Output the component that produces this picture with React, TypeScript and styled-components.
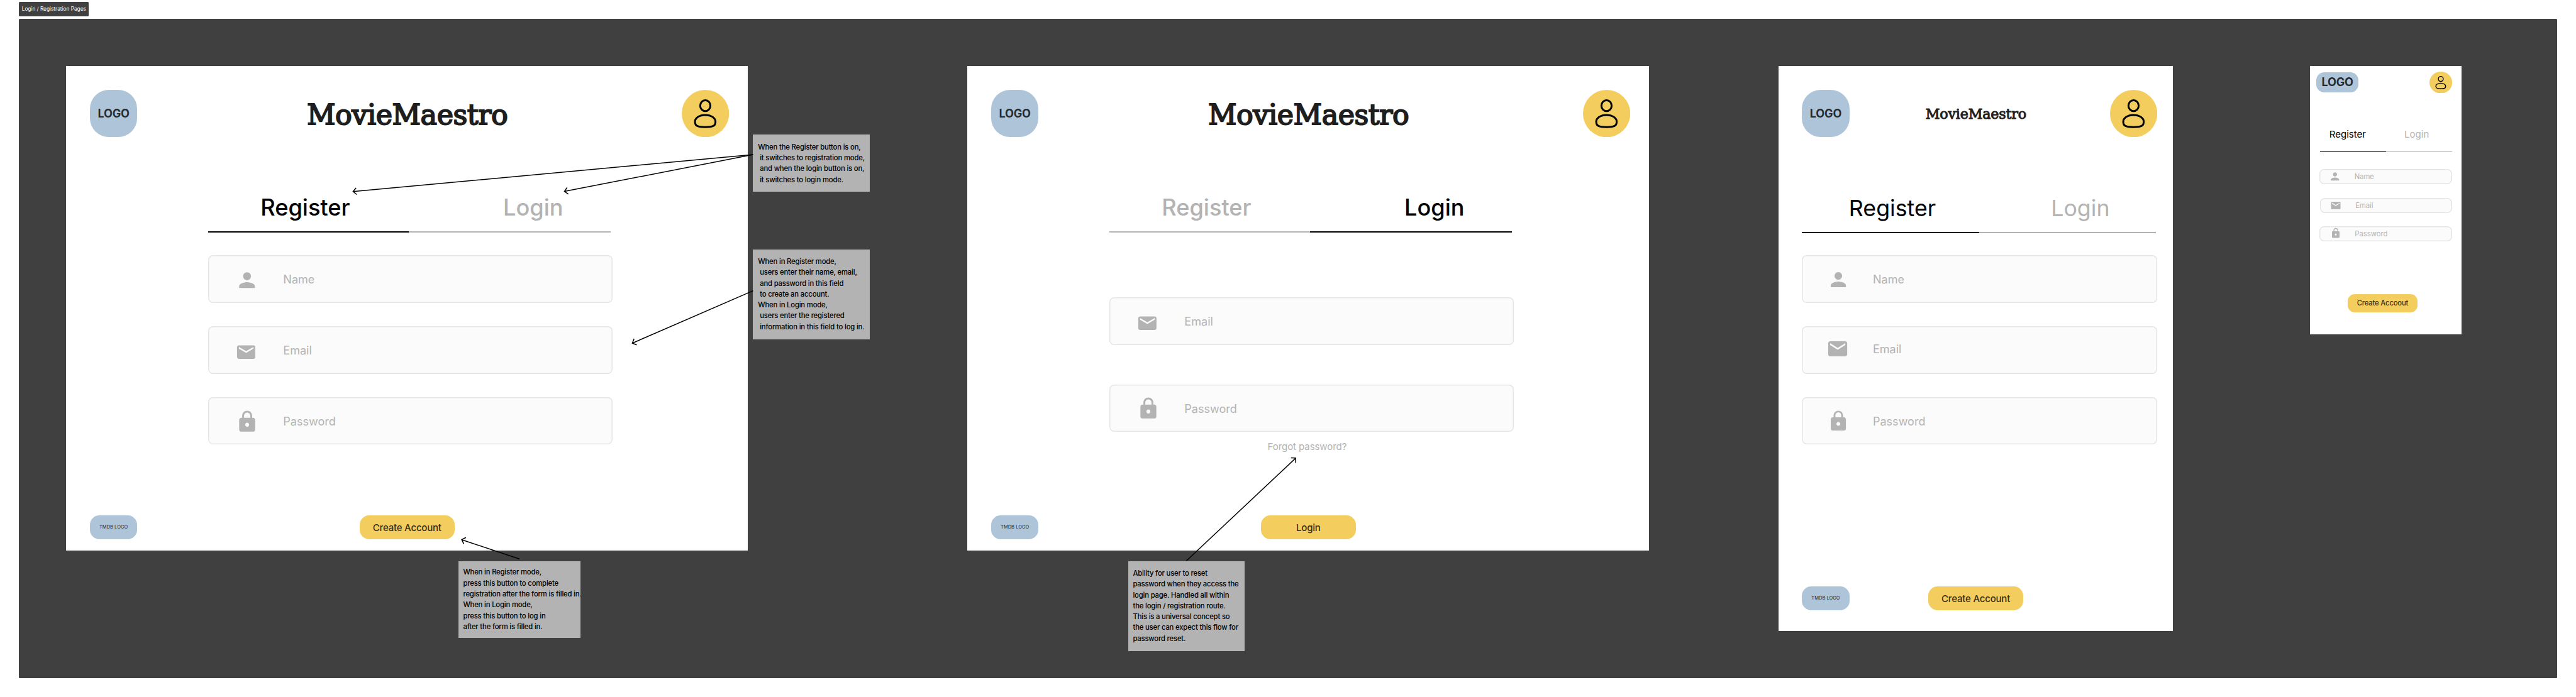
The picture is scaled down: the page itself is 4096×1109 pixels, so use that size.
import React from "react";
import styled, { createGlobalStyle, css } from "styled-components";

/* 1rem equals ten units of the design canvas (canvas width: 544.2rem). */
const u = (n: number) => `${+(n / 10).toFixed(3)}rem`;

const GlobalStyle = createGlobalStyle`
  html { font-size: 7.5266px; }
  body {
    margin: 0;
    background: #fff;
    overflow: hidden;
    font-family: Inter, "Liberation Sans", sans-serif;
  }
  *, *::before, *::after { box-sizing: border-box; }
`;

/* ---------- canvas ---------- */

const Page = styled.div`
  width: ${u(5442)};
  height: ${u(1473)};
  padding: ${u(4)} ${u(40)} 0;
`;

const SectionLabel = styled.div`
  display: flex;
  align-items: center;
  justify-content: center;
  width: ${u(148)};
  height: ${u(30)};
  margin-bottom: ${u(6)};
  border-radius: ${u(2)};
  background: #404040;
  color: #fff;
  font-size: ${u(11)};
  line-height: 1;
  white-space: nowrap;
`;

const Section = styled.section`
  position: relative;
  display: flex;
  align-items: flex-start;
  height: ${u(1394)};
  padding: ${u(100)};
  border-radius: ${u(2)};
  background: #404040;
`;

const Artboard = styled.article<{ $w: number; $h: number; $gap?: number }>`
  display: flex;
  flex-direction: column;
  flex: none;
  width: ${(p) => u(p.$w)};
  height: ${(p) => u(p.$h)};
  margin-left: ${(p) => u(p.$gap ?? 0)};
  background: #fff;
`;

/* ---------- header ---------- */

const Header = styled.header<{ $right: number }>`
  display: grid;
  grid-template-columns: ${u(100)} 1fr ${u(100)};
  align-items: center;
  height: ${u(150)};
  padding: ${u(50)} ${(p) => u(p.$right)} 0 ${u(50)};
`;

const PhoneHeader = styled.header`
  display: flex;
  justify-content: space-between;
  align-items: center;
  padding: ${u(11)} ${u(20)} 0 ${u(13)};
`;

const Logo = styled.div<{ $w: number; $h: number; $r: number }>`
  display: flex;
  align-items: center;
  justify-content: center;
  width: ${(p) => u(p.$w)};
  height: ${(p) => u(p.$h)};
  border-radius: ${(p) => u(p.$r)};
  background: #adc4d9;
  color: rgba(0, 0, 0, 0.8);
  font-size: ${u(24)};
  font-weight: 700;
  letter-spacing: -0.01em;
  line-height: 1;
`;

const Title = styled.h1<{ $size: number; $shift: number; $top: number }>`
  margin: 0;
  padding: ${(p) => u(p.$top)} ${(p) => u(p.$shift)} 0 0;
  color: #1e1e1e;
  font-family: "Roboto Slab", "DejaVu Serif", serif;
  font-size: ${(p) => u(p.$size)};
  font-weight: 400;
  letter-spacing: -0.0097em;
  line-height: 1.2;
  text-align: center;
  -webkit-text-stroke: 0.045em #1e1e1e;
`;

const AvatarSvg = styled.svg<{ $w: number; $h: number }>`
  display: block;
  width: ${(p) => u(p.$w)};
  height: ${(p) => u(p.$h)};
`;

function Avatar({ w = 100, h = 100 }: { w?: number; h?: number }) {
  return (
    <AvatarSvg $w={w} $h={h} viewBox="0 0 100 100" preserveAspectRatio="none">
      <circle cx="50" cy="50" r="50" fill="#f3cd5d" />
      <g fill="none" stroke="#000" strokeWidth="4">
        <ellipse cx="49.8" cy="33.5" rx="10.8" ry="11.5" />
        <path d="M49.7 53C62 53 71.3 59.3 71.3 67.3C71.3 76 66 78.6 49.7 78.6C33.4 78.6 28 76 28 67.3C28 59.3 37.4 53 49.7 53Z" />
      </g>
    </AvatarSvg>
  );
}

/* ---------- tabs ---------- */

const Tabs = styled.nav<{ $top: number; $left: number }>`
  display: flex;
  margin: ${(p) => u(p.$top)} 0 0 ${(p) => u(p.$left)};
`;

const Tab = styled.div<{ $w: number; $inset: number; $size: number; $active?: boolean; $kind: Kind }>`
  display: flex;
  flex-direction: column;
  justify-content: space-between;
  width: ${(p) => u(p.$w)};
  height: ${(p) => u(p.$kind === "phone" ? 52 : 82.5)};
  color: ${(p) => (p.$active ? "#000" : "#b3b3b3")};
  font-size: ${(p) => u(p.$size)};
  font-weight: ${(p) => (p.$kind === "desktop" ? 500 : 400)};
  line-height: ${(p) => u(p.$kind === "phone" ? 30 : 60)};
  text-indent: ${(p) => u(p.$inset)};
  white-space: nowrap;

  &::after {
    content: "";
    height: ${(p) => (p.$kind === "phone" ? "1px" : "2px")};
    background: currentColor;
  }
`;

/* ---------- form ---------- */

type Kind = "desktop" | "tablet" | "phone";
type IconName = "person" | "mail" | "lock";

const ICONS: Record<IconName, string> = {
  person:
    "M12 12c2.21 0 4-1.79 4-4s-1.79-4-4-4-4 1.79-4 4 1.79 4 4 4zm0 2c-2.67 0-8 1.34-8 4v2h16v-2c0-2.66-5.33-4-8-4z",
  mail: "M20 4H4c-1.1 0-1.99.9-1.99 2L2 18c0 1.1.9 2 2 2h16c1.1 0 2-.9 2-2V6c0-1.1-.9-2-2-2zm0 4l-8 5-8-5V6l8 5 8-5v2z",
  lock: "M18 8h-1V6c0-2.76-2.24-5-5-5S7 3.24 7 6v2H6c-1.1 0-2 .9-2 2v10c0 1.1.9 2 2 2h12c1.1 0 2-.9 2-2V10c0-1.1-.9-2-2-2zm-6 9c-1.1 0-2-.9-2-2s.9-2 2-2 2 .9 2 2-.9 2-2 2zm3.1-9H8.9V6c0-1.71 1.39-3.1 3.1-3.1 1.71 0 3.1 1.39 3.1 3.1v2z",
};

/* Icon frame inside its field: left, top, width, height. */
const ICON_FRAMES: Record<Kind, Record<IconName, [number, number, number, number]>> = {
  desktop: {
    person: [57, 27.6, 50, 50],
    mail: [57.3, 32.4, 46.2, 42.9],
    lock: [56.8, 25.8, 50.5, 50.5],
  },
  tablet: {
    person: [52.2, 28, 48, 48],
    mail: [52, 23, 48, 48],
    lock: [52.2, 26, 48, 48],
  },
  phone: {
    person: [20.4, 1.7, 26, 26],
    mail: [21, 4, 24, 24],
    lock: [23, 2.6, 24, 24],
  },
};

const Form = styled.div<{ $top: number; $left: number; $gap: number }>`
  display: flex;
  flex-direction: column;
  align-items: flex-start;
  gap: ${(p) => u(p.$gap)};
  margin: ${(p) => u(p.$top)} 0 0 ${(p) => u(p.$left)};
`;

const FieldBox = styled.label<{ $w: number; $h: number; $text: number; $size: number; $nudge: number }>`
  display: grid;
  grid-template-columns: ${(p) => u(p.$text)} 1fr;
  width: ${(p) => u(p.$w)};
  height: ${(p) => u(p.$h)};
  margin-left: ${(p) => u(p.$nudge)};
  border-radius: ${u(10)};
  background: #fbfbfb;
  box-shadow: inset 0 0 0 ${u(2)} #e6e6e6;
  color: #b3b3b3;
  font-size: ${(p) => u(p.$size)};
`;

const FieldIcon = styled.svg<{ $f: [number, number, number, number] }>`
  display: block;
  width: ${(p) => u(p.$f[2])};
  height: ${(p) => u(p.$f[3])};
  margin: ${(p) => u(p.$f[1])} 0 0 ${(p) => u(p.$f[0])};
  fill: currentColor;
`;

const FieldText = styled.span<{ $center: number }>`
  line-height: ${(p) => u(p.$center * 2)};
`;

interface FieldProps {
  kind: Kind;
  icon: IconName;
  text: string;
  center?: number;
  h?: number;
  nudge?: number;
  textX?: number;
}

function Field({ kind, icon, text, center, h, nudge = 0, textX }: FieldProps) {
  const base = {
    desktop: { w: 854, h: 100, x: 158.3, size: 24, c: 52 },
    tablet: { w: 750, h: 100, x: 149.6, size: 24, c: 51.4 },
    phone: { w: 280, h: 31, x: 74, size: 15, c: 16.2 },
  }[kind];
  return (
    <FieldBox $w={base.w} $h={h ?? base.h} $text={textX ?? base.x} $size={base.size} $nudge={nudge}>
      <FieldIcon $f={ICON_FRAMES[kind][icon]} viewBox="0 0 24 24" preserveAspectRatio="none">
        <path d={ICONS[icon]} />
      </FieldIcon>
      <FieldText $center={center ?? base.c}>{text}</FieldText>
    </FieldBox>
  );
}

const ForgotLink = styled.div`
  margin: ${u(15.6)} 0 0 ${u(634)};
  color: #b3b3b3;
  font-size: ${u(20)};
  letter-spacing: ${u(-0.13)};
  line-height: ${u(31)};
`;

/* ---------- footer ---------- */

const Footer = styled.footer<{ $bottom: number }>`
  display: grid;
  grid-template-columns: 1fr auto 1fr;
  margin-top: auto;
  padding: 0 ${u(50)} ${(p) => u(p.$bottom)};
`;

const TmdbLogo = styled.div`
  display: flex;
  align-items: center;
  justify-content: center;
  width: ${u(100)};
  height: ${u(50)};
  border-radius: ${u(20)};
  background: #adc4d9;
  color: rgba(0, 0, 0, 0.85);
  font-size: ${u(10)};
  line-height: 1;
  white-space: nowrap;
`;

const PrimaryButton = styled.button<{ $small?: boolean }>`
  display: flex;
  align-items: center;
  justify-content: center;
  width: ${u(200)};
  height: ${u(50)};
  padding: 0;
  border: 0;
  border-radius: ${u(20)};
  background: #f3cd5d;
  color: rgba(0, 0, 0, 0.8);
  font-family: inherit;
  font-size: ${u(20)};
  font-weight: 500;
  letter-spacing: -0.015em;
  line-height: 1;
  white-space: nowrap;
  ${(p) =>
    p.$small &&
    css`
      width: ${u(147)};
      height: ${u(38)};
      margin: auto 0 ${u(47)} ${u(80)};
      border-radius: ${u(15)};
      font-size: ${u(15)};
    `}
`;

/* ---------- annotations lying over the canvas ---------- */

const Note = styled.p<{ $x: number; $y: number; $w: number; $h: number; $pad: number }>`
  position: absolute;
  left: ${(p) => u(p.$x - 40)};
  top: ${(p) => u(p.$y - 40)};
  width: ${(p) => u(p.$w)};
  height: ${(p) => u(p.$h)};
  margin: 0;
  padding: ${(p) => u(p.$pad)} 0 0 ${u(10.5)};
  background: #b3b3b3;
  color: #000;
  font-size: ${u(15)};
  font-weight: 500;
  letter-spacing: ${u(-0.23)};
  line-height: ${u(23)};
  white-space: pre;
`;

const ArrowLayer = styled.svg`
  position: absolute;
  left: 0;
  top: 0;
  width: ${u(5362)};
  height: ${u(1394)};
  pointer-events: none;
  fill: none;
  stroke: #000;
  stroke-width: 2;
`;

type Arrow = [number, number, number, number];

const ARROWS: Arrow[] = [
  [1591, 327, 746, 405],
  [1591, 327, 1192.5, 404.8],
  [1591, 614.8, 1336, 725.6],
  [1098, 1182, 975.5, 1141],
  [2506.3, 1186, 2737.5, 968.5],
];

function arrowPath([x1, y1, x2, y2]: Arrow) {
  const angle = Math.atan2(y1 - y2, x1 - x2);
  const wing = (turn: number) =>
    `${(x2 + 10 * Math.cos(angle + turn)).toFixed(1)} ${(y2 + 10 * Math.sin(angle + turn)).toFixed(1)}`;
  return `M${x1} ${y1}L${x2} ${y2}M${wing(Math.PI / 4)}L${x2} ${y2}L${wing(-Math.PI / 4)}`;
}

/* ---------- screens ---------- */

function DesktopScreen({ mode, gap }: { mode: "register" | "login"; gap?: number }) {
  const register = mode === "register";
  return (
    <Artboard $w={1440} $h={1024} $gap={gap}>
      <Header $right={40}>
        <Logo $w={100} $h={100} $r={40}>LOGO</Logo>
        <Title $size={59} $shift={9} $top={5.4}>MovieMaestro</Title>
        <Avatar />
      </Header>
      <Tabs $top={119.5} $left={300}>
        <Tab $kind="desktop" $w={424} $inset={110.5} $size={48} $active={register}>Register</Tab>
        <Tab $kind="desktop" $w={426} $inset={199} $size={48} $active={!register}>Login</Tab>
      </Tabs>
      {register ? (
        <Form $top={48} $left={300} $gap={50}>
          <Field kind="desktop" icon="person" text="Name" />
          <Field kind="desktop" icon="mail" text="Email" />
          <Field kind="desktop" icon="lock" text="Password" />
        </Form>
      ) : (
        <>
          <Form $top={137} $left={300} $gap={84}>
            <Field kind="desktop" icon="mail" text="Email" />
            <Field kind="desktop" icon="lock" text="Password" />
          </Form>
          <ForgotLink>Forgot password?</ForgotLink>
        </>
      )}
      <Footer $bottom={24}>
        <TmdbLogo>TMDB LOGO</TmdbLogo>
        <PrimaryButton>{register ? "Create Account" : "Login"}</PrimaryButton>
      </Footer>
    </Artboard>
  );
}

function TabletScreen() {
  return (
    <Artboard $w={834} $h={1194} $gap={273}>
      <Header $right={34}>
        <Logo $w={100} $h={100} $r={40}>LOGO</Logo>
        <Title $size={29.6} $shift={15.5} $top={1.8}>MovieMaestro</Title>
        <Avatar />
      </Header>
      <Tabs $top={120.5} $left={50}>
        <Tab $kind="tablet" $w={374} $inset={99} $size={47.5} $active>Register</Tab>
        <Tab $kind="tablet" $w={374} $inset={152} $size={47.5}>Login</Tab>
      </Tabs>
      <Form $top={47} $left={50} $gap={50}>
        <Field kind="tablet" icon="person" text="Name" />
        <Field kind="tablet" icon="mail" text="Email" center={48.6} />
        <Field kind="tablet" icon="lock" text="Password" />
      </Form>
      <Footer $bottom={44}>
        <TmdbLogo>TMDB LOGO</TmdbLogo>
        <PrimaryButton>Create Account</PrimaryButton>
      </Footer>
    </Artboard>
  );
}

function PhoneScreen() {
  return (
    <Artboard $w={320} $h={567} $gap={289}>
      <PhoneHeader>
        <Logo $w={90} $h={42} $r={17}>LOGO</Logo>
        <Avatar w={48} h={46} />
      </PhoneHeader>
      <Tabs $top={73} $left={21}>
        <Tab $kind="phone" $w={140} $inset={20} $size={20} $active>Register</Tab>
        <Tab $kind="phone" $w={140} $inset={38.5} $size={20}>Login</Tab>
      </Tabs>
      <Form $top={36} $left={20} $gap={29}>
        <Field kind="phone" icon="person" text="Name" h={32} />
        <Field kind="phone" icon="mail" text="Email" nudge={1} textX={75} />
        <Field kind="phone" icon="lock" text="Password" textX={74.8} />
      </Form>
      <PrimaryButton $small>Create Accoout</PrimaryButton>
    </Artboard>
  );
}

export default function App() {
  return (
    <>
      <GlobalStyle />
      <Page>
        <SectionLabel>Login / Registration Pages</SectionLabel>
        <Section>
          <DesktopScreen mode="register" />
          <DesktopScreen mode="login" gap={464} />
          <TabletScreen />
          <PhoneScreen />

          <Note $x={1591} $y={285} $w={246} $h={120} $pad={15}>
            {"When the Register button is on,\n it switches to registration mode,\n and when the login button is on,\n it switches to login mode."}
          </Note>
          <Note $x={1591} $y={527} $w={246} $h={190} $pad={15}>
            {"When in Register mode,\n users enter their name, email,\n and password in this field\n to create an account.\nWhen in Login mode,\n users enter the registered\n information in this field to log in."}
          </Note>
          <Note $x={968} $y={1186} $w={259} $h={162} $pad={13}>
            {"When in Register mode,\npress this button to complete\nregistration after the form is filled in.\nWhen in Login mode,\npress this button to log in\nafter the form is filled in."}
          </Note>
          <Note $x={2383} $y={1186} $w={246} $h={190} $pad={15}>
            {"Ability for user to reset\npassword when they access the\nlogin page. Handled all within\nthe login / registration route.\nThis is a universal concept so\nthe user can expect this flow for\npassword reset."}
          </Note>

          <ArrowLayer viewBox="40 40 5362 1394">
            {ARROWS.map((a) => (
              <path key={a.join()} d={arrowPath(a)} />
            ))}
          </ArrowLayer>
        </Section>
      </Page>
    </>
  );
}
